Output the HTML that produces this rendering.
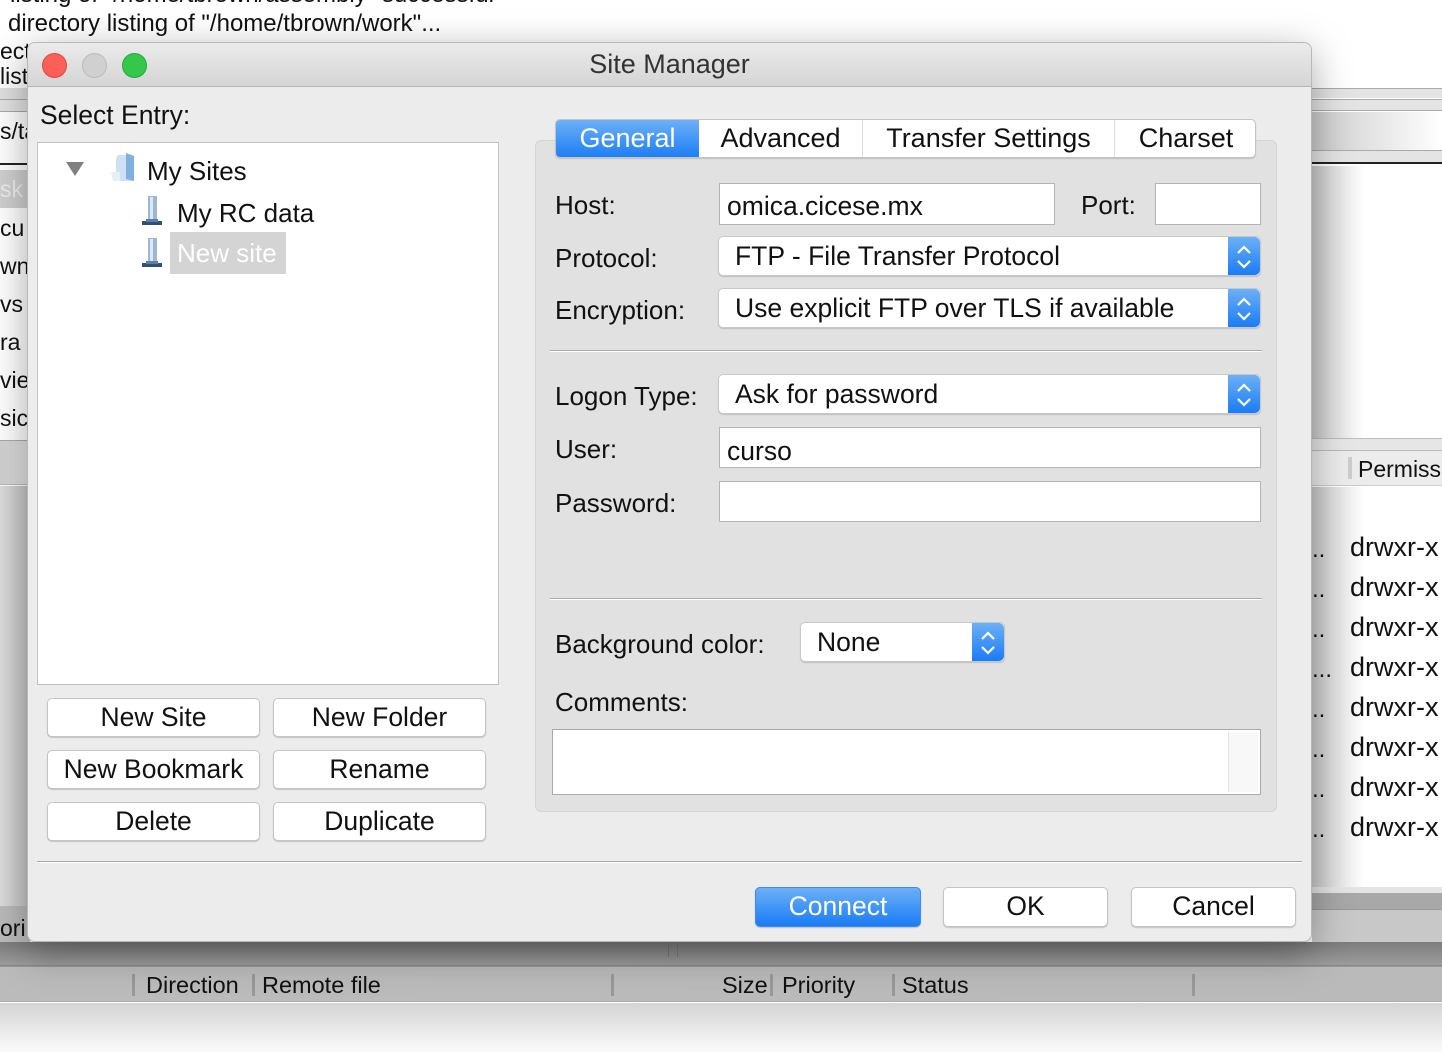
<!DOCTYPE html>
<html><head><meta charset="utf-8">
<style>
*{box-sizing:border-box;margin:0;padding:0}
body{width:1442px;height:1052px;position:relative;overflow:hidden;background:#fff;font-family:"Liberation Sans",sans-serif;color:#111;font-size:24px}
.a{position:absolute;white-space:nowrap}
.btn{position:absolute;background:#fff;border:1px solid #c4c4c4;border-radius:5px;box-shadow:0 1px 1px rgba(0,0,0,.18);text-align:center;font-size:26.5px;line-height:37px}
.inp{position:absolute;background:#fff;border:1px solid #b4b4b4}
.sel{position:absolute;background:#fff;border:1px solid #c8c8c8;border-radius:5px;box-shadow:0 1px 1px rgba(0,0,0,.15);font-size:26.5px;line-height:38px;padding-left:16px;overflow:hidden}
.sel .ar{position:absolute;right:0;top:0;bottom:0;width:32px;background:linear-gradient(#6cb0f7,#1a7cf5);border-radius:0 5px 5px 0}
.lbl{position:absolute;font-size:26px;white-space:nowrap}
</style></head><body>
<!-- background app -->
<div class="a" style="left:10px;top:-19px;font-size:24px">listing of "/home/tbrown/assembly" successful</div>
<div class="a" style="left:8px;top:10px;font-size:24px">directory listing of "/home/tbrown/work"...</div>
<div class="a" style="left:0;top:38px;font-size:23px">ect</div>
<div class="a" style="left:0;top:63px;font-size:23px">list</div>
<div class="a" style="left:0;top:88px;width:30px;height:12px;background:#e0e0e0;border-bottom:1px solid #aaa"></div>
<div class="a" style="left:0;top:100px;width:30px;height:12px;background:#e3e3e3;border-bottom:1px solid #aaa"></div>
<div class="a" style="left:0;top:118px;font-size:23px">s/ta</div>
<div class="a" style="left:0;top:163px;width:30px;height:2px;background:#222"></div>
<div class="a" style="left:0;top:170px;width:30px;height:38px;background:#d0d0d0;color:#eee;font-size:23px;line-height:38px">sk</div>
<div class="a" style="left:0;top:215px;font-size:23px">cu</div>
<div class="a" style="left:0;top:253px;font-size:23px">wn</div>
<div class="a" style="left:0;top:291px;font-size:23px">vs</div>
<div class="a" style="left:0;top:329px;font-size:23px">ra</div>
<div class="a" style="left:0;top:367px;font-size:23px">vie</div>
<div class="a" style="left:0;top:405px;font-size:23px">sic</div>
<div class="a" style="left:0;top:440px;width:30px;height:45px;background:linear-gradient(90deg,#d0d0d0,#e6e6e6);border-top:1px solid #aaa;border-bottom:1px solid #bbb"></div>
<div class="a" style="left:0;top:486px;width:30px;height:420px;background:linear-gradient(90deg,#ddd,#c4c4c4)"></div>
<div class="a" style="left:0;top:906px;width:30px;height:40px;background:#bbb;font-size:23px;line-height:44px">ori</div>

<div class="a" style="left:1312px;top:88px;width:130px;height:10px;background:#e4e4e4;border-top:1px solid #aaa"></div>
<div class="a" style="left:1312px;top:99px;width:130px;height:12px;background:#e4e4e4;border-top:1px solid #aaa;border-bottom:1px solid #aaa"></div>
<div class="a" style="left:1312px;top:112px;width:130px;height:38px;background:linear-gradient(90deg,#ccc,#fff)"></div>
<div class="a" style="left:1312px;top:150px;width:130px;height:14px;background:#e4e4e4;border-top:1px solid #aaa;border-bottom:2px solid #222"></div>
<div class="a" style="left:1312px;top:166px;width:130px;height:272px;background:linear-gradient(90deg,#c8c8c8,#fff 40%)"></div>
<div class="a" style="left:1312px;top:438px;width:130px;height:12px;background:#e6e6e6;border-top:1px solid #bbb"></div>
<div class="a" style="left:1312px;top:450px;width:130px;height:36px;background:#ececec;border-top:1px solid #bbb;border-bottom:1px solid #ccc"></div>
<div class="a" style="left:1348px;top:457px;width:4px;height:22px;background:#ccc"></div>
<div class="a" style="left:1358px;top:456px;font-size:23px">Permiss</div>
<div class="a" style="left:1312px;top:487px;width:130px;height:400px;background:linear-gradient(90deg,#c8c8c8,#fff 40%)"></div>
<div class="a" style="left:1312px;top:530px;font-size:24px;line-height:40px">..<br>..<br>..<br>...<br>..<br>..<br>..<br>..</div>
<div class="a" style="left:1350px;top:527px;font-size:27px;line-height:40px">drwxr-x<br>drwxr-x<br>drwxr-x<br>drwxr-x<br>drwxr-x<br>drwxr-x<br>drwxr-x<br>drwxr-x</div>
<div class="a" style="left:1312px;top:887px;width:130px;height:6px;background:#e4e4e4"></div>
<div class="a" style="left:1312px;top:893px;width:130px;height:16px;background:#a8a8a8"></div>
<div class="a" style="left:1312px;top:909px;width:130px;height:33px;background:#c8c8c8;border-top:1px solid #999"></div>

<div class="a" style="left:0;top:942px;width:1442px;height:24px;background:linear-gradient(#7c7c7c,#9c9c9c);border-bottom:1px solid #888"></div>
<div class="a" style="left:668px;top:942px;width:10px;height:15px;border-left:1px solid #777;border-right:1px solid #777"></div>
<div class="a" style="left:0;top:966px;width:1442px;height:36px;background:linear-gradient(90deg,#bbb,#bababa);border-top:1px solid #999;border-bottom:1px solid #aaa"></div>
<div class="a" style="left:132px;top:974px;width:3px;height:22px;background:#999"></div>
<div class="a" style="left:146px;top:972px;font-size:23.5px">Direction</div>
<div class="a" style="left:252px;top:974px;width:3px;height:22px;background:#999"></div>
<div class="a" style="left:262px;top:972px;font-size:23.5px">Remote file</div>
<div class="a" style="left:611px;top:974px;width:3px;height:22px;background:#999"></div>
<div class="a" style="left:722px;top:972px;font-size:23.5px">Size</div>
<div class="a" style="left:770px;top:974px;width:3px;height:22px;background:#999"></div>
<div class="a" style="left:782px;top:972px;font-size:23.5px">Priority</div>
<div class="a" style="left:892px;top:974px;width:3px;height:22px;background:#999"></div>
<div class="a" style="left:902px;top:972px;font-size:23.5px">Status</div>
<div class="a" style="left:1192px;top:974px;width:3px;height:22px;background:#999"></div>
<div class="a" style="left:0;top:1003px;width:1442px;height:49px;background:linear-gradient(#d4d4d4,#fafafa)"></div>

<!-- dialog -->
<div class="a" style="left:27px;top:42px;width:1285px;height:900px;background:#ececec;border-radius:8px;border:1px solid #b8b8b8;box-shadow:0 10px 40px rgba(0,0,0,.35);overflow:hidden">
  <div class="a" style="left:0;top:0;width:1285px;height:44px;background:linear-gradient(#ebebeb,#d5d5d5);border-bottom:1px solid #b4b4b4"></div>
  <div class="a" style="left:0;top:6px;width:1283px;text-align:center;font-size:27px;color:#333">Site Manager</div>
  <div class="a" style="left:14px;top:10px;width:25px;height:25px;border-radius:50%;background:#fc5f57;border:1px solid #e2463f"></div>
  <div class="a" style="left:54px;top:10px;width:25px;height:25px;border-radius:50%;background:#d0d0d0;border:1px solid #bbb"></div>
  <div class="a" style="left:94px;top:10px;width:25px;height:25px;border-radius:50%;background:#34c84a;border:1px solid #23a93a"></div>
</div>

<div class="lbl" style="left:40px;top:100px;font-size:26.5px">Select Entry:</div>
<div class="a" style="left:37px;top:142px;width:462px;height:543px;background:#fff;border:1px solid #c0c0c0"></div>
<svg class="a" style="left:66px;top:162px" width="18" height="14"><path d="M0 0H18L9 14Z" fill="#808080"/></svg>
<svg class="a" style="left:108px;top:152px" width="30" height="32"><path d="M10 3h14l2 2v24H8V6z" fill="#cfe0f2"/><path d="M18 1l8 3v25l-8-2z" fill="#7fb0e0"/><path d="M3 20h9v9H5z" fill="#e6eef8"/></svg>
<div class="a" style="left:147px;top:156px;font-size:26px">My Sites</div>
<svg class="a" style="left:140px;top:195px" width="24" height="32"><rect x="8" y="1" width="9" height="24" fill="#9cb7d6"/><rect x="10" y="2" width="3" height="22" fill="#dce8f5"/><path d="M2 26h20v4H2z" fill="#2d4f7a"/><path d="M6 24h12v3H6z" fill="#5d7ea8"/></svg>
<div class="a" style="left:177px;top:198px;font-size:26px">My RC data</div>
<svg class="a" style="left:140px;top:237px" width="24" height="32"><rect x="8" y="1" width="9" height="24" fill="#9cb7d6"/><rect x="10" y="2" width="3" height="22" fill="#dce8f5"/><path d="M2 26h20v4H2z" fill="#2d4f7a"/><path d="M6 24h12v3H6z" fill="#5d7ea8"/></svg>
<div class="a" style="left:170px;top:232px;width:116px;height:42px;background:#d4d4d4;color:#fff;font-size:26px;line-height:42px;padding-left:7px">New site</div>

<div class="btn" style="left:47px;top:698px;width:213px;height:39px">New Site</div>
<div class="btn" style="left:273px;top:698px;width:213px;height:39px">New Folder</div>
<div class="btn" style="left:47px;top:750px;width:213px;height:39px">New Bookmark</div>
<div class="btn" style="left:273px;top:750px;width:213px;height:39px">Rename</div>
<div class="btn" style="left:47px;top:802px;width:213px;height:39px">Delete</div>
<div class="btn" style="left:273px;top:802px;width:213px;height:39px">Duplicate</div>

<div class="a" style="left:37px;top:861px;width:1265px;height:2px;background:#a8a8a8;border-bottom:1px solid #fff"></div>
<div class="btn" style="left:755px;top:887px;width:166px;height:40px;background:linear-gradient(#6cb0f7,#1a7cf5);border-color:#3a8cf0;color:#fff;font-size:26.5px">Connect</div>
<div class="btn" style="left:943px;top:887px;width:165px;height:40px;font-size:26.5px">OK</div>
<div class="btn" style="left:1131px;top:887px;width:165px;height:40px;font-size:26.5px">Cancel</div>

<!-- right panel -->
<div class="a" style="left:535px;top:140px;width:742px;height:672px;background:#e1e1e1;border:1px solid #d4d4d4;border-radius:6px"></div>
<div class="a" style="left:555px;top:119px;width:701px;height:39px;background:#fff;border:1px solid #c4c4c4;border-radius:5px;box-shadow:0 1px 1px rgba(0,0,0,.15);overflow:hidden;font-size:27px;line-height:37px">
  <div class="a" style="left:0;top:0;width:143px;height:39px;background:linear-gradient(#6cb0f7,#1a7cf5);color:#fff;text-align:center">General</div>
  <div class="a" style="left:143px;top:0;width:164px;height:39px;text-align:center;border-right:1px solid #ddd">Advanced</div>
  <div class="a" style="left:307px;top:0;width:252px;height:39px;text-align:center;border-right:1px solid #ddd">Transfer Settings</div>
  <div class="a" style="left:559px;top:0;width:142px;height:39px;text-align:center">Charset</div>
</div>

<div class="lbl" style="left:555px;top:190px">Host:</div>
<div class="inp" style="left:719px;top:183px;width:336px;height:42px;font-size:26.5px;line-height:44px;padding-left:7px">omica.cicese.mx</div>
<div class="lbl" style="left:1081px;top:190px">Port:</div>
<div class="inp" style="left:1155px;top:183px;width:106px;height:42px"></div>

<div class="lbl" style="left:555px;top:243px">Protocol:</div>
<div class="sel" style="left:718px;top:236px;width:543px;height:40px">FTP - File Transfer Protocol<div class="ar"><svg width="32" height="40"><path d="M10 16l6-6 6 6M10 24l6 6 6-6" stroke="#fff" stroke-width="2.2" fill="none"/></svg></div></div>
<div class="lbl" style="left:555px;top:295px">Encryption:</div>
<div class="sel" style="left:718px;top:288px;width:543px;height:40px">Use explicit FTP over TLS if available<div class="ar"><svg width="32" height="40"><path d="M10 16l6-6 6 6M10 24l6 6 6-6" stroke="#fff" stroke-width="2.2" fill="none"/></svg></div></div>

<div class="a" style="left:550px;top:350px;width:712px;height:2px;background:#a8a8a8;border-bottom:1px solid #fff"></div>

<div class="lbl" style="left:555px;top:381px">Logon Type:</div>
<div class="sel" style="left:718px;top:374px;width:543px;height:40px">Ask for password<div class="ar"><svg width="32" height="40"><path d="M10 16l6-6 6 6M10 24l6 6 6-6" stroke="#fff" stroke-width="2.2" fill="none"/></svg></div></div>
<div class="lbl" style="left:555px;top:434px">User:</div>
<div class="inp" style="left:719px;top:427px;width:542px;height:41px;font-size:26.5px;line-height:46px;padding-left:7px">curso</div>
<div class="lbl" style="left:555px;top:488px">Password:</div>
<div class="inp" style="left:719px;top:481px;width:542px;height:41px"></div>

<div class="a" style="left:550px;top:598px;width:712px;height:2px;background:#a8a8a8;border-bottom:1px solid #fff"></div>

<div class="lbl" style="left:555px;top:629px">Background color:</div>
<div class="sel" style="left:800px;top:622px;width:205px;height:40px">None<div class="ar"><svg width="32" height="40"><path d="M10 16l6-6 6 6M10 24l6 6 6-6" stroke="#fff" stroke-width="2.2" fill="none"/></svg></div></div>
<div class="lbl" style="left:555px;top:687px">Comments:</div>
<div class="inp" style="left:552px;top:729px;width:709px;height:66px;border-color:#aaa"><div class="a" style="right:2px;top:2px;width:30px;bottom:2px;background:#f8f8f8;border-left:1px solid #e4e4e4"></div></div>
</body></html>
